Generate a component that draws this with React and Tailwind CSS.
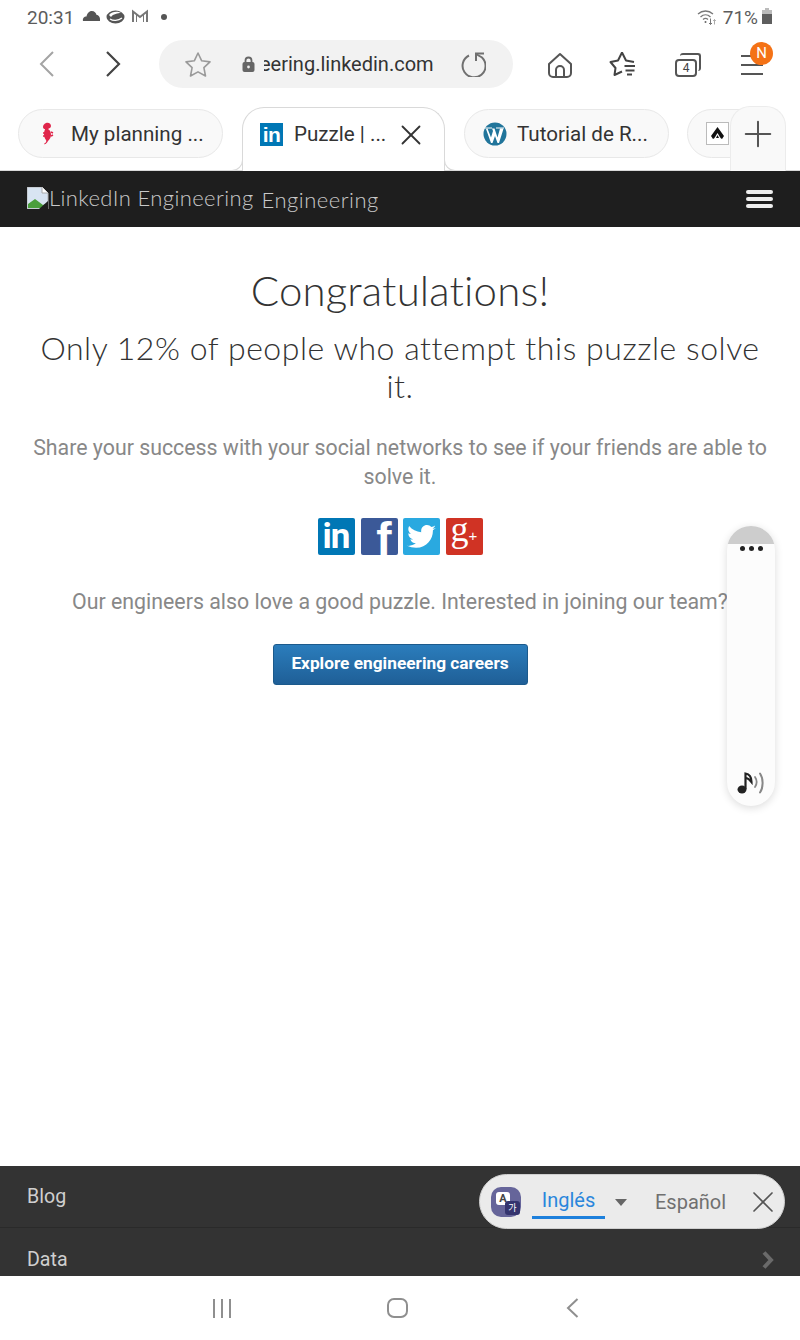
import { X, Plus } from 'lucide-react';

const StatusBar = () => (
  <div className="h-[35px] shrink-0 flex items-center justify-between pl-[27px] pr-[27px] text-[#5c5c5c]">
    <div className="flex items-center">
      <span className="text-[19px] leading-none">20:31</span>
      {/* cloud */}
      <svg width="19" height="12" viewBox="0 0 19 12" className="ml-[8px] -mt-[3px]" fill="#555">
        <path d="M1 11c-.6-2.500 1-4.500 3.500-4.500C5 3.500 7 1 9.800 1c2.600 0 4.300 1.800 4.800 4 2.300 0 3.800 2.500 3.400 6z" />
      </svg>
      {/* hat */}
      <svg width="19" height="15" viewBox="0 0 19 15" className="ml-[5px] -mt-[3px]">
        <ellipse cx="9.500" cy="8" rx="9" ry="6.500" fill="#555" />
        <path d="M3 6c3-4 9-4 12-2-3 0-8 1-10 4z" fill="#fff" />
        <path d="M4 10c3 2 8 2 12-1" stroke="#fff" strokeWidth="1.200" fill="none" />
      </svg>
      {/* gmail */}
      <svg width="18" height="14" viewBox="0 0 18 14" className="ml-[6px] -mt-[3px]" fill="none" stroke="#777" strokeWidth="2">
        <path d="M2 13V2.500l7 5.500 7-5.500V13" />
        <path d="M5.500 6v7M12.500 6v7" strokeWidth="1" />
      </svg>
      <div className="ml-[12px] -mt-[2px] w-[6px] h-[6px] rounded-full bg-[#555]" />
    </div>
    <div className="flex items-center">
      <svg width="20" height="17" viewBox="0 0 20 17" fill="none" stroke="#777" strokeWidth="1.300" className="-mt-[1px]">
        <path d="M1 5c4.500-4 10.500-4 15 0" />
        <path d="M3.500 8c3-2.800 7-2.800 10 0" />
        <path d="M6 10.500c1.700-1.500 3.300-1.500 5 0" />
        <circle cx="8.500" cy="13" r="1" fill="#666" stroke="none" />
        <path d="M13.500 9.500v6M12 14l1.500 1.500L15 14" strokeWidth="1" />
        <path d="M17.500 15.500v-5M16.200 12l1.300-1.500 1.300 1.500" strokeWidth="1" stroke="#aaa" />
      </svg>
      <span className="text-[19px] leading-none ml-[6px]">71%</span>
      <svg width="12" height="17" viewBox="0 0 12 17" className="ml-[3px] -mt-[3px]">
        <rect x="4" y="0" width="4" height="2" fill="#bbb" />
        <rect x="1" y="2" width="10" height="4" fill="#bbb" />
        <rect x="1" y="6" width="10" height="10" fill="#5e5e5e" />
      </svg>
    </div>
  </div>
);

const Toolbar = () => (
  <div className="h-[58px] shrink-0 flex items-center">
    <svg width="16" height="26" viewBox="0 0 16 26" fill="none" stroke="#a4a4a4" strokeWidth="2" className="ml-[39px]">
      <path d="M14 1 2 13l12 12" />
    </svg>
    <svg width="16" height="26" viewBox="0 0 16 26" fill="none" stroke="#444" strokeWidth="2.200" className="ml-[50px]">
      <path d="M2 1l12 12L2 25" />
    </svg>
    <div className="ml-[38px] w-[354px] h-[48px] rounded-full bg-[#f2f2f2] flex items-center">
      <svg width="28" height="27" viewBox="0 0 28 27" fill="none" stroke="#9a9a9a" strokeWidth="1.600" className="ml-[25px]" strokeLinejoin="round">
        <path d="M14 2l3.700 7.800 8.300 1.100-6.100 5.800 1.600 8.300-7.500-4.100L6.500 25l1.600-8.300L2 10.900l8.300-1.100z" />
      </svg>
      <svg width="13" height="16" viewBox="0 0 13 16" className="ml-[30px]">
        <path d="M3.500 7V4.500a3 3 0 0 1 6 0V7" fill="none" stroke="#666" strokeWidth="1.800" />
        <rect x="0.500" y="6" width="12" height="10" rx="2" fill="#666" />
        <circle cx="6.500" cy="11" r="1.400" fill="#eee" />
      </svg>
      <div className="ml-[9px] w-[170px] overflow-hidden">
        <span className="block -ml-[4px] text-[20px] text-[#333] whitespace-nowrap">eering.linkedin.com</span>
      </div>
      {/* reload */}
      <svg width="26" height="26" viewBox="0 0 26 26" fill="none" stroke="#707070" strokeWidth="2" className="ml-[26px]">
        <path d="M9 4.500A11.500 11.500 0 1 0 22 6.500L16 3" />
        <path d="M16 10V2.500h8" />
      </svg>
    </div>
    {/* home */}
    <svg width="26" height="26" viewBox="0 0 26 26" fill="none" stroke="#555" strokeWidth="2" className="ml-[34px] mt-[1px]">
      <path d="M2 12 13 2l11 10v9a4 4 0 0 1-4 4H6a4 4 0 0 1-4-4z" strokeLinejoin="round" />
      <path d="M9 25v-7a4 4 0 0 1 8 0v7" />
    </svg>
    {/* favourites */}
    <svg width="28" height="26" viewBox="0 0 28 26" fill="none" stroke="#444" strokeWidth="2" className="ml-[36px]" strokeLinejoin="round">
      <path d="M13 1.500 17 9.500 25 11M13 1.500 9 9.500 1.500 11l5 6-1 7 7.500-3.500" />
      <path d="M15.500 15h10.500M16.500 19.500h9M18 23.500h5" strokeWidth="1.800" />
    </svg>
    {/* tabs count */}
    <div className="relative ml-[38px] w-[26px] h-[24px] mt-[1px]">
      <div className="absolute left-[5px] top-0 w-[21px] h-[18px] rounded-[3px] border-t-2 border-r-2 border-[#555]" />
      <div className="absolute left-0 top-[6px] w-[22px] h-[18px] rounded-[4px] border-2 border-[#555] bg-white flex items-center justify-center text-[12px] leading-none text-[#444]">
        4
      </div>
    </div>
    {/* menu */}
    <div className="relative ml-[40px] mt-[2px] w-[22px] flex flex-col gap-[7px]">
      <div className="h-[2px] bg-[#555]" />
      <div className="h-[2px] bg-[#555]" />
      <div className="h-[2px] bg-[#555]" />
      <div className="absolute -right-[10px] -top-[13px] w-[23px] h-[23px] rounded-full bg-[#f47216] text-white text-[15px] flex items-center justify-center">
        N
      </div>
    </div>
  </div>
);

const Seahorse = () => (
  <svg width="14" height="24" viewBox="0 0 14 24" fill="#e0264b" className="shrink-0">
    <path d="M5 1c3-1 5 1 5 3 0 2-2 2-3 3 2 1 3 3 3 6 0 2-1 4-3 6-1 2-3 4-4 3 1-1 3-2 2-4-1-1-2-3-2-6 0-3 1-4 1-5-1 0-2-.5-2-2 0-2 1-3 3-4z" />
    <path d="M2 11h2M2 14h2M10 10l2 1M10 14l2-1" stroke="#e0264b" strokeWidth="1.500" />
  </svg>
);

const Wordpress = () => (
  <svg width="24" height="24" viewBox="0 0 24 24" className="shrink-0">
    <circle cx="12" cy="12" r="11.500" fill="#21759b" />
    <path d="M3 7l5 14h1.500l2.500-7 2.500 7H16l3.500-11 1-3.500H17l-2.500 9-3-9H9l1 2.500-2 6.500-3.500-9z" fill="#fff" />
    <path d="M2 6h7M13 6h8" stroke="#fff" strokeWidth="1" />
  </svg>
);

const TabStrip = () => (
  <div className="relative h-[78px] shrink-0 overflow-hidden flex items-start pl-[18px]">
    <div className="mt-[16px] w-[205px] h-[49px] shrink-0 rounded-full bg-[#f9f9f9] border border-[#e8e8e8] flex items-center pl-[22px] text-[#333]">
      <Seahorse />
      <span className="ml-[16px] mt-[1px] text-[20.6px] whitespace-nowrap">My planning ...</span>
    </div>
    <div className="relative z-10 mt-[14px] ml-[19px] w-[203px] h-[64px] shrink-0 rounded-t-[22px] border border-b-0 border-[#d9d9d9] bg-white flex items-start pl-[17px] pt-[14px]">
      <div className="w-[23px] h-[23px] bg-[#0077b5] text-white text-[21px] font-bold leading-[23px] text-center tracking-tight font-['Liberation_Sans',sans-serif] mt-[1px] shrink-0">
        in
      </div>
      <span className="ml-[11px] -mt-[1px] w-[98px] text-[20.6px] leading-[26px] text-[#333] whitespace-nowrap">Puzzle | ...</span>
      <X size={34} strokeWidth={1.300} className="ml-[2px] -mt-[4px] text-[#333] shrink-0" />
      <div className="absolute -left-[11px] bottom-0 w-[11px] h-[12px] border-r border-b border-[#d9d9d9] rounded-br-[11px] bg-white" />
      <div className="absolute -right-[11px] bottom-0 w-[11px] h-[12px] border-l border-b border-[#d9d9d9] rounded-bl-[11px] bg-white" />
    </div>
    <div className="mt-[16px] ml-[19px] w-[205px] h-[49px] shrink-0 rounded-full bg-[#f9f9f9] border border-[#e8e8e8] flex items-center pl-[18px] text-[#333]">
      <Wordpress />
      <span className="ml-[10px] mt-[1px] text-[20.6px] whitespace-nowrap">Tutorial de R...</span>
    </div>
    <div className="mt-[16px] ml-[18px] w-[80px] h-[49px] shrink-0 rounded-full bg-[#f9f9f9] border border-[#e8e8e8] flex items-center pl-[18px]">
      <div className="w-[23px] h-[23px] border border-[#bbb] bg-white flex items-center justify-center">
        <svg width="15" height="15" viewBox="0 0 15 15">
          <path d="M7.500 1L14 10l-2 3-4.500-3L3 13l-2-3z" fill="#111" />
          <path d="M7.500 7l3 5h-6z" fill="#fff" />
          <path d="M7.500 9l1.500 3h-3z" fill="#111" />
        </svg>
      </div>
    </div>
    {/* new tab button sits over the last tab */}
    <div className="absolute z-10 left-[730px] top-[13px] w-[56px] h-[65px] rounded-t-[20px] border border-b-0 border-[#ececec] bg-[#f9f9f9] flex items-start justify-center pt-[6px]">
      <Plus size={42} strokeWidth={1.150} className="text-[#555]" />
    </div>
    <div className="absolute left-0 right-0 bottom-0 h-px bg-[#d9d9d9]" />
  </div>
);

const BrokenImage = () => (
  <svg width="22" height="22" viewBox="0 0 22 22" className="shrink-0">
    <path d="M0 0h15l6 6v16H0z" fill="#d8e4f2" stroke="#b5b5b5" />
    <path d="M15 0v6h6" fill="#fff" stroke="#aaa" />
    <path d="M1 21v-4l7-5 8 6 5-2v5z" fill="#4a9e3c" />
    <path d="M12 22l9-8v8z" fill="#1e1e1e" />
  </svg>
);

const Nav = () => (
  <div className="h-[56px] shrink-0 bg-[#1e1e1e] flex items-center pl-[27px] pr-[27px] font-['Lato',sans-serif] font-light text-[#c9c9c9] text-[22px] leading-none tracking-[0.4px]">
    <div className="flex items-center -mt-[3px]">
      <BrokenImage />
      <span className="whitespace-nowrap">LinkedIn Engineering</span>
    </div>
    <span className="ml-[8px] mt-[2px] tracking-[0.5px]">Engineering</span>
    <div className="ml-auto flex flex-col gap-[3px]">
      <div className="w-[27px] h-[4px] rounded-full bg-[#eee]" />
      <div className="w-[27px] h-[4px] rounded-full bg-[#eee]" />
      <div className="w-[27px] h-[4px] rounded-full bg-[#eee]" />
    </div>
  </div>
);

const Social = ({ className, children }) => (
  <div className={`w-[37px] h-[37px] rounded-[2px] flex items-center justify-center ${className}`}>
    {children}
  </div>
);

const Content = () => (
  <div className="flex-1 flex flex-col items-center pt-[38px] text-center">
    <h1 className="font-['Lato',sans-serif] font-light text-[42px] leading-[50px] text-[#333] tracking-[0.15px]">
      Congratulations!
    </h1>
    <h2 className="mt-[14px] w-[730px] font-['Lato',sans-serif] font-light text-[32px] leading-[38px] text-[#333] tracking-[0.55px]">
      Only 12% of people who attempt this puzzle solve it.
    </h2>
    <p className="mt-[28px] w-[760px] text-[21.33px] leading-[29px] text-[#888]">
      Share your success with your social networks to see if your friends are able to solve it.
    </p>
    <div className="mt-[27px] flex">
      <Social className="bg-[#0077b5] text-white">
        <span className="font-bold text-[35px] leading-[37px] tracking-tight">in</span>
      </Social>
      <Social className="ml-[6px] bg-[#3b5998] text-white">
        <span className="font-['Liberation_Sans',sans-serif] font-bold text-[46px] leading-[37px] mt-[6px] ml-[10px]">f</span>
      </Social>
      <Social className="ml-[5px] bg-[#2aa9e0]">
        <svg width="29" height="24" viewBox="0 0 24 20" fill="#fff">
          <path d="M24 2.400c-.9.400-1.800.7-2.800.8 1-.6 1.800-1.600 2.200-2.700-1 .6-2 1-3.100 1.200C19.300.7 18 0 16.600 0c-2.700 0-4.900 2.200-4.900 4.900 0 .4 0 .8.100 1.100C7.700 5.800 4.100 3.800 1.700.9c-.4.700-.7 1.600-.7 2.500 0 1.700.9 3.200 2.200 4.100-.8 0-1.600-.2-2.200-.6v.1c0 2.400 1.700 4.400 3.900 4.800-.4.100-.8.200-1.300.2-.3 0-.6 0-.9-.1.600 2 2.400 3.400 4.600 3.400-1.700 1.300-3.800 2.100-6.100 2.100-.4 0-.8 0-1.200-.1C2.200 18.200 4.800 19 7.500 19c9.100 0 14-7.500 14-14v-.6c1-.7 1.800-1.500 2.500-2z" />
        </svg>
      </Social>
      <Social className="ml-[6px] bg-[#d03324] text-white">
        <span className="font-['Liberation_Serif',serif] text-[36px] leading-[37px] -mt-[14px]">g</span>
        <span className="font-['Liberation_Sans',sans-serif] text-[15px] leading-none -mt-[3px]">+</span>
      </Social>
    </div>
    <p className="mt-[32px] w-[760px] text-[21.33px] leading-[29px] text-[#888] whitespace-nowrap">
      Our engineers also love a good puzzle. Interested in joining our team?
    </p>
    <button className="mt-[28px] w-[255px] h-[41px] pb-[2px] rounded-[3px] border border-[#1c5a8c] bg-gradient-to-b from-[#2b7dbc] to-[#1f5f97] text-white text-[17.3px] font-bold">
      Explore engineering careers
    </button>
  </div>
);

const Footer = () => (
  <div className="h-[110px] shrink-0 bg-[#333333] overflow-hidden">
    <div className="h-[62px] flex items-center pl-[27px] border-b border-[#2a2a2a] text-[19.600px] text-[#cfcfcf]">
      Blog
    </div>
    <div className="h-[48px] flex items-end justify-between pl-[27px] pr-[26px] pb-[1px] text-[19.600px] leading-[30px] text-[#cfcfcf]">
      <span>Data</span>
      <svg width="12" height="18" viewBox="0 0 12 18" fill="none" stroke="#6a6a6a" strokeWidth="4" className="mb-[6px]">
        <path d="M2 1.500 9 9l-7 7.500" />
      </svg>
    </div>
  </div>
);

const SystemNav = () => (
  <div className="h-[64px] shrink-0 bg-white flex items-center">
    <div className="ml-[213px] flex gap-[6px]">
      <div className="w-[2px] h-[19px] bg-[#8f8f8f]" />
      <div className="w-[2px] h-[19px] bg-[#8f8f8f]" />
      <div className="w-[2px] h-[19px] bg-[#8f8f8f]" />
    </div>
    <div className="ml-[156px] w-[21px] h-[20px] rounded-[7px] border-2 border-[#8f8f8f]" />
    <svg width="13" height="20" viewBox="0 0 13 20" fill="none" stroke="#8f8f8f" strokeWidth="2" className="ml-[158px]">
      <path d="M11.500 1 2 10l9.500 9" />
    </svg>
  </div>
);

const SidePanel = () => (
  <div className="absolute left-[727px] top-[526px] w-[48px] h-[280px] rounded-full bg-[#fcfcfc] shadow-[0_2px_8px_rgba(0,0,0,0.14)] overflow-hidden flex flex-col items-center">
    <div className="w-full h-[18px] bg-[#cdcdcd] shrink-0" />
    <div className="mt-[2px] flex gap-[4px]">
      <div className="w-[5px] h-[5px] rounded-full bg-[#222]" />
      <div className="w-[5px] h-[5px] rounded-full bg-[#222]" />
      <div className="w-[5px] h-[5px] rounded-full bg-[#222]" />
    </div>
    <svg width="30" height="22" viewBox="0 0 30 22" fill="none" className="mt-auto mb-[12px]">
      <ellipse cx="6" cy="17.500" rx="4.500" ry="4" fill="#222" />
      <path d="M9.500 17V1.500c3.500.5 6 3.500 6 8.500-1.500-2-3-3.500-5-4" stroke="#222" strokeWidth="2.200" />
      <path d="M19 5c2 3 2 7 0 10" stroke="#888" strokeWidth="1.800" strokeLinecap="round" />
      <path d="M24 1.500c3.500 5 3.500 14 0 19" stroke="#888" strokeWidth="2" strokeLinecap="round" />
    </svg>
  </div>
);

const TranslateBar = () => (
  <div className="absolute z-20 left-[479px] top-[1174px] w-[306px] h-[55px] rounded-full bg-[#ebebeb] border border-[#cfcfcf] flex items-center">
    <div className="relative ml-[11px] w-[30px] h-[30px] shrink-0 rounded-[10px] bg-[#66659a]">
      <div className="absolute left-[5px] top-[5px] w-[14px] h-[13px] rounded-[3px] bg-white text-[#444] text-[11px] font-bold leading-[13px] text-center">A</div>
      <div className="absolute right-[1px] bottom-[2px] w-[15px] h-[14px] rounded-[3px] bg-[#34346e] text-white text-[9px] leading-[14px] text-center font-['Noto_Sans_CJK_KR',sans-serif]">가</div>
    </div>
    <div className="ml-[11px] w-[73px] h-[39px] mb-[5px] flex flex-col items-center justify-end border-b-[3px] border-[#1d80dc] text-[#2a86dc] text-[20px] leading-[30px] pb-[1px]">
      Inglés
    </div>
    <div className="ml-[10px] w-0 h-0 border-x-[6px] border-x-transparent border-t-[7px] border-t-[#666] mt-[1px]" />
    <span className="ml-[28px] text-[20px] text-[#707070] mt-[1px]">Español</span>
    <X size={36} strokeWidth={1.100} className="ml-[19px] text-[#555] mt-[1px] shrink-0" />
  </div>
);

export default function App() {
  return (
    <div className="relative w-[800px] h-[1340px] overflow-hidden bg-white flex flex-col font-['Roboto',sans-serif]">
      <StatusBar />
      <Toolbar />
      <TabStrip />
      <Nav />
      <Content />
      <Footer />
      <SystemNav />
      <SidePanel />
      <TranslateBar />
    </div>
  );
}
